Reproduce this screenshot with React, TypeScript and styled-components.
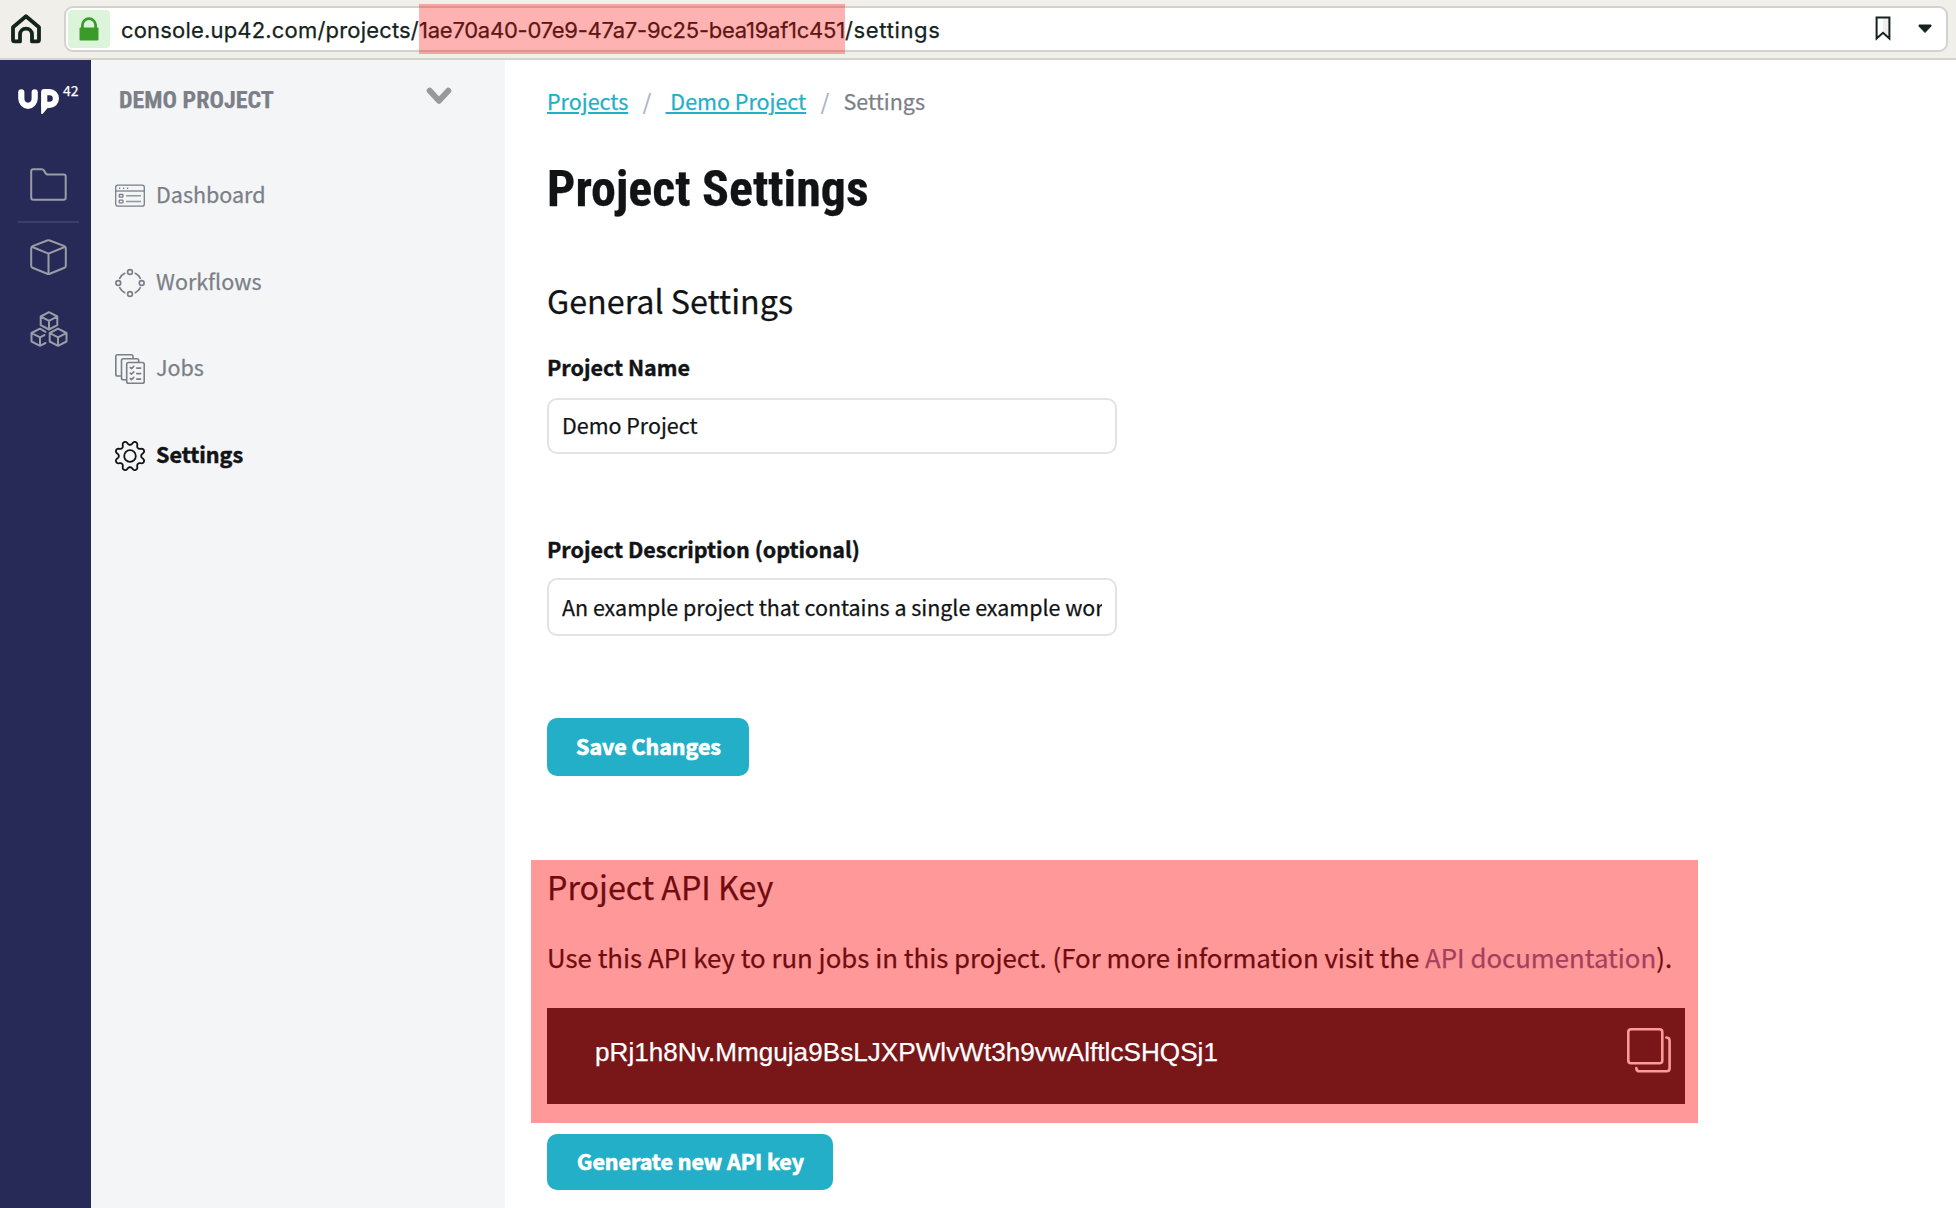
import React from "react";
import styled, { createGlobalStyle } from "styled-components";

const sans = '"Noto Sans CJK SC", "Noto Sans", sans-serif';
const condensed = '"Roboto Condensed", Roboto, sans-serif';

const GlobalStyle = createGlobalStyle`
  * { box-sizing: border-box; }
  body { margin: 0; background: #fff; }
`;

const Page = styled.div`
  height: 1208px;
  display: flex;
  flex-direction: column;
  overflow: hidden;
  font-family: ${sans};
  color: #111315;
  white-space: nowrap;
  -webkit-text-stroke: 0.25px currentColor;
`;

/* Browser bar */

const BrowserBar = styled.header`
  flex: none;
  height: 60px;
  display: flex;
  align-items: flex-start;
  padding: 6px 8px 0 9px;
  background: #f0efe9;
  border-bottom: 2px solid #d3d2cd;
`;

const HomeButton = styled.div`
  width: 34px;
  height: 46px;
  display: flex;
  align-items: center;
  margin-right: 21px;
`;

const AddressField = styled.div`
  flex: 1;
  height: 46px;
  display: flex;
  align-items: center;
  padding: 0 14px 0 2px;
  background: #fff;
  border: 2px solid #d3d2cd;
  border-radius: 9px;
`;

const LockBadge = styled.div`
  width: 42px;
  height: 38px;
  display: flex;
  align-items: center;
  justify-content: center;
  background: #dcf5da;
  border-radius: 4px;
`;

const Url = styled.div`
  flex: 1;
  display: flex;
  padding-left: 11px;
  font-family: Inter, sans-serif;
  font-size: 22px;
  line-height: 50px;
  color: #14231b;
`;

const UrlPart = styled.span<{ $width: number; $tracking: number }>`
  width: ${(p) => p.$width}px;
  padding-top: 1px;
  letter-spacing: ${(p) => p.$tracking}px;
  position: relative;
`;

const UrlMark = styled.span`
  position: absolute;
  inset: 0 0 1px;
  background: rgba(255, 0, 0, 0.3);
`;

const FieldActions = styled.div`
  display: flex;
  align-items: center;
  gap: 27px;
`;

/* Navigation */

const Body = styled.div`
  flex: 1;
  display: flex;
  min-height: 0;
`;

const Rail = styled.nav`
  flex: none;
  width: 91px;
  display: flex;
  flex-direction: column;
  align-items: center;
  padding: 25px 0 0 6px;
  background: #272a57;
`;

const Logo = styled.div`
  width: 61px;
  height: 31px;
  display: flex;
  align-items: flex-start;
`;

const LogoExponent = styled.span`
  margin-left: 2px;
  margin-top: -2px;
  font-size: 14px;
  line-height: 14px;
  color: #fff;
`;

const RailItem = styled.div<{ $gap: number }>`
  height: 40px;
  margin-top: ${(p) => p.$gap}px;
  display: flex;
  align-items: center;
`;

const RailDivider = styled.div`
  width: 61px;
  height: 2px;
  margin-top: 17px;
  background: #3c3e69;
`;

const SidePanel = styled.aside`
  flex: none;
  width: 414px;
  padding: 22px 53px 0 24px;
  background: #f3f5f7;
`;

const ProjectSwitch = styled.div`
  height: 34px;
  display: flex;
  justify-content: space-between;
  padding-left: 4px;
  margin-bottom: 56px;
`;

const ProjectTitle = styled.span`
  font-family: ${condensed};
  font-weight: 700;
  font-size: 24px;
  line-height: 36px;
  color: #7b7f87;
`;

const ChevronBox = styled.span`
  display: flex;
  height: 18px;
  margin-top: 5px;
`;

const MenuItem = styled.div<{ $active?: boolean }>`
  height: 48px;
  margin-bottom: 38.5px;
  display: flex;
  align-items: center;
  gap: 11px;
  font-size: 21.5px;
  font-weight: ${(p) => (p.$active ? 700 : 400)};
  color: ${(p) => (p.$active ? "#111315" : "#7b7f87")};
  -webkit-text-stroke-width: ${(p) => (p.$active ? 0.5 : 0.25)}px;
`;

const MenuText = styled.span`
  line-height: 32px;
  padding-bottom: 4px;
`;

/* Content */

const Content = styled.main`
  flex: 1;
  display: flex;
  flex-direction: column;
  align-items: flex-start;
  padding: 26px 0 0 42px;
`;

const Breadcrumb = styled.div`
  display: flex;
  height: 30px;
  font-size: 21.5px;
  line-height: 30px;
  color: #7b7f87;
`;

const CrumbLink = styled.a`
  color: #22afc7;
  white-space: pre;
  text-decoration: underline;
  text-decoration-thickness: 2px;
  text-underline-offset: 2px;
`;

const Slash = styled.span`
  width: 37.3px;
  text-align: center;
  color: #a9b0bf;
`;

const Title = styled.h1`
  margin: 43px 0 0;
  font-family: ${condensed};
  font-weight: 700;
  font-size: 50px;
  line-height: 60px;
`;

const SectionTitle = styled.h2<{ $top: number }>`
  margin: ${(p) => p.$top}px 0 0;
  font-weight: 400;
  font-size: 32.25px;
  line-height: 40px;
`;

const Label = styled.label<{ $top: number }>`
  margin-top: ${(p) => p.$top}px;
  font-weight: 700;
  font-size: 21.5px;
  line-height: 30px;
  -webkit-text-stroke-width: 0.4px;
`;

const TextField = styled.div<{ $top: number; $height: number }>`
  width: 570px;
  height: ${(p) => p.$height}px;
  margin-top: ${(p) => p.$top}px;
  padding: 0 13px;
  border: 2px solid #e2e2e8;
  border-radius: 10px;
  background: #fff;
`;

const FieldValue = styled.div<{ $line: number }>`
  overflow: hidden;
  font-size: 21.45px;
  line-height: ${(p) => p.$line}px;
`;

const Button = styled.button<{ $top: number; $height: number; $width: number }>`
  width: ${(p) => p.$width}px;
  height: ${(p) => p.$height}px;
  margin: ${(p) => p.$top}px 0 0;
  padding: 0 0 3px 1px;
  border: 0;
  border-radius: 10px;
  background: #22afc7;
  color: #fff;
  font-family: ${sans};
  font-weight: 700;
  font-size: 21.4px;
  line-height: 32px;
  -webkit-text-stroke: 0.7px #fff;
`;

const KeyPanel = styled.section`
  width: 1167px;
  height: 263px;
  margin: 84px 0 0 -16px;
  padding: 6px 13px 0 16px;
  background: #ff9999;
  color: #700c0f;
`;

const KeyHint = styled.p`
  margin: 33px 0 0;
  font-size: 25.8px;
  line-height: 36px;
`;

const DocLink = styled.a`
  color: #a53f5d;
`;

const KeyBox = styled.div`
  height: 96px;
  margin-top: 33px;
  display: flex;
  align-items: flex-start;
  justify-content: space-between;
  padding: 20px 14px 0 48px;
  background: #791618;
`;

const KeyValue = styled.span`
  font-family: "Liberation Sans", Arial, sans-serif;
  font-size: 26.1px;
  letter-spacing: 0.03px;
  line-height: 48px;
  color: #fff;
`;

/* Icons */

const HomeIcon = () => (
  <svg width="34" height="32" viewBox="0 0 34 32" fill="none" stroke="#14231b" strokeWidth="3.8" strokeLinejoin="round" strokeLinecap="round">
    <path d="M4 14.2 17 3.2l13 11v12.6q0 1.600-1.600 1.600h-5.400v-6.700a6 6 0 0 0-12 0v6.700H5.600Q4 28.400 4 26.800Z" />
  </svg>
);

const LockIcon = () => (
  <svg width="20" height="24" viewBox="0 0 20 24">
    <path d="M3.400 12V8.300a6.600 6.600 0 0 1 13.200 0V12" fill="none" stroke="#3a9c28" strokeWidth="2.800" />
    <rect x="0.500" y="10.500" width="19" height="13" rx="1" fill="#3a9c28" />
  </svg>
);

const BookmarkIcon = () => (
  <svg width="16" height="26" viewBox="0 0 16 26">
    <path d="M8 1h6v22l-6-6Z" fill="#efefef" />
    <path d="M1.600 1.600h12.800v21L8 16.800l-6.400 5.800Z" fill="none" stroke="#14231b" strokeWidth="2" />
  </svg>
);

const CaretIcon = () => (
  <svg width="14" height="10" viewBox="0 0 14 10">
    <path d="M1 1h12v1.200L7 8.500 1 2.200Z" fill="#14231b" stroke="#14231b" strokeLinejoin="round" />
  </svg>
);

const LogoMark = () => (
  <svg width="43" height="31" viewBox="0 0 43 31" role="img" aria-label="up" fill="none" stroke="#fff">
    <path d="M3.300 7.300v6.300a6.700 7.200 0 0 0 13.400 0V7.300" strokeWidth="6.200" strokeLinecap="round" />
    <path d="M26.200 19.800V7.200h5.400a6.300 6.300 0 0 1 0 12.600Z" strokeWidth="6.200" strokeLinejoin="round" />
    <path d="M23.100 18v10.200q.4 1.300 1.700.5l5-5.900V18Z" fill="#fff" stroke="none" />
  </svg>
);

const FolderIcon = () => (
  <svg width="37" height="33" viewBox="0 0 37 33" fill="none" stroke="#9a9da6" strokeWidth="2" strokeLinejoin="round">
    <path d="M1.200 3.200q0-2 2-2h8.600q1.300 0 2 1.100l2.100 3.300q.6.900 1.800.9h16q2 0 2 2v21.300q0 2-2 2H3.200q-2 0-2-2Z" />
  </svg>
);

const CubeIcon = () => (
  <svg width="37" height="36" viewBox="0 0 37 36" fill="none" stroke="#9a9da6" strokeWidth="2" strokeLinejoin="round">
    <path d="M17.200 1.500q1.300-.5 2.600 0l14.600 5.600q1.400.6 1.400 2v17.700q0 1.400-1.300 2l-14.700 6q-1.300.5-2.600 0l-14.700-6q-1.300-.6-1.300-2V9.100q0-1.400 1.400-2Z" />
    <path d="m1.700 7.800 16.800 6.800 16.800-6.800M18.500 14.600v20.300" />
  </svg>
);

const BlocksIcon = () => (
  <svg width="38" height="36" viewBox="0 0 38 36" fill="none" stroke="#9a9da6" strokeWidth="2" strokeLinejoin="round" strokeLinecap="round">
    <path d="m19 1.200 8.300 4.300v8.700L19 18.500l-8.300-4.300V5.500ZM11 5.700l8 4.100 8-4.100M19 9.800v8.400" />
    <path d="M28 17.700 36.500 22v8.500L28 34.800l-8.300-4.300V22ZM20 22.200l8 4.100 8.200-4.100M28 26.300v8.200" />
    <path d="M15.500 20.800 10 17.700 1.500 22v8.500l8.500 4.300 5.500-2.800M1.800 22.200l8.200 4.100 4.500-2.300M10 26.300v8.200" />
  </svg>
);

const ChevronIcon = () => (
  <svg width="26" height="18" viewBox="0 0 26 18" fill="none" stroke="#999" strokeWidth="6" strokeLinecap="round" strokeLinejoin="round">
    <path d="M3.700 3.800 13 13.800l9.300-10" />
  </svg>
);

const DashboardIcon = () => (
  <svg width="30" height="30" viewBox="0 0 30 30" fill="none" stroke="currentColor" strokeWidth="1.300">
    <rect x="0.700" y="4.200" width="28.600" height="21" rx="2.200" />
    <path d="M.7 10h28.600" />
    <path d="M4 7.200h1.200M8 7.200h1.200M12 7.200h1.200" strokeWidth="1.400" />
    <rect x="4.200" y="13.500" width="3.800" height="2.600" rx="0.600" />
    <rect x="4.200" y="19.200" width="3.800" height="2.600" rx="0.600" />
    <path d="M11 14.800h15M11 20.500h15" strokeWidth="1.400" opacity="0.800" />
  </svg>
);

const WorkflowIcon = () => (
  <svg width="30" height="30" viewBox="0 0 30 30" fill="none" stroke="currentColor" strokeWidth="1.700" strokeLinecap="round">
    <circle cx="15" cy="4" r="2.400" />
    <circle cx="26.700" cy="15" r="2.400" />
    <circle cx="15" cy="26" r="2.400" />
    <circle cx="3.300" cy="15" r="2.400" />
    <path d="M4.700 10.300q1.600-3.300 5-5M20.300 5.300q3.400 1.700 5 5M25.300 19.700q-1.600 3.300-5 5M9.700 24.700q-3.400-1.700-5-5" />
  </svg>
);

const JobsIcon = () => (
  <svg width="30" height="30" viewBox="0 0 30 30" fill="none" stroke="currentColor" strokeWidth="1.600" strokeLinejoin="round" strokeLinecap="round">
    <path d="M5.500 22H2.600Q.8 22 .8 20.200V2.600Q.8.800 2.600.8h13.600Q18 .8 18 2.600v1.200" />
    <path d="M11 25.800H8.300q-1.800 0-1.800-1.800V6.500q0-1.800 1.800-1.800H22q1.700 0 1.700 1.800v1.200" />
    <rect x="11.700" y="8.500" width="17.500" height="20.700" rx="1.800" />
    <path d="m15.300 13.600 1.200 1 2.300-2.200M15.300 19.100l1.200 1 2.300-2.200M15.300 24.600l1.200 1 2.300-2.200M21.700 14.100h4M21.700 19.600h4M21.700 25.100h4" />
  </svg>
);

const gearPath = Array.from({ length: 144 }, (_, i) => {
  const angle = (i / 144) * Math.PI * 2;
  const wave = Math.tanh(-1.4 * Math.cos(8 * angle)) / Math.tanh(1.4);
  const radius = 13.1 + 1.9 * wave;
  const x = (15 + radius * Math.sin(angle)).toFixed(2);
  const y = (15 - radius * Math.cos(angle)).toFixed(2);
  return `${i ? "L" : "M"}${x} ${y}`;
}).join("");

const GearIcon = () => (
  <svg width="30" height="30" viewBox="0 0 30 30" fill="none" stroke="currentColor" strokeWidth="1.800" strokeLinejoin="round">
    <path d={gearPath + "Z"} />
    <circle cx="15" cy="15" r="5.800" />
  </svg>
);

const CopyIcon = () => (
  <svg width="44" height="45" viewBox="0 0 44 45" fill="none" stroke="#ff9999" strokeWidth="2.600" strokeLinecap="round">
    <rect x="1.300" y="1.300" width="34" height="34" rx="2.800" />
    <path d="M39.400 9.500q3.200.2 3.200 3.200v27.600q0 3-3 3H12.500q-3 0-3.200-3.200" />
  </svg>
);

const menu = [
  { name: "Dashboard", Icon: DashboardIcon },
  { name: "Workflows", Icon: WorkflowIcon },
  { name: "Jobs", Icon: JobsIcon },
  { name: "Settings", Icon: GearIcon, active: true },
];

export default function App() {
  return (
    <Page>
      <GlobalStyle />
      <BrowserBar>
        <HomeButton><HomeIcon /></HomeButton>
        <AddressField>
          <LockBadge><LockIcon /></LockBadge>
          <Url>
            <UrlPart $width={298} $tracking={0.18}>console.up42.com/projects/</UrlPart>
            <UrlPart $width={426} $tracking={-0.25}>
              1ae70a40-07e9-47a7-9c25-bea19af1c451
              <UrlMark />
            </UrlPart>
            <UrlPart $width={100} $tracking={0.65}>/settings</UrlPart>
          </Url>
          <FieldActions><BookmarkIcon /><CaretIcon /></FieldActions>
        </AddressField>
      </BrowserBar>
      <Body>
        <Rail>
          <Logo><LogoMark /><LogoExponent>42</LogoExponent></Logo>
          <RailItem $gap={48}><FolderIcon /></RailItem>
          <RailDivider />
          <RailItem $gap={14}><CubeIcon /></RailItem>
          <RailItem $gap={32}><BlocksIcon /></RailItem>
        </Rail>
        <SidePanel>
          <ProjectSwitch>
            <ProjectTitle>DEMO PROJECT</ProjectTitle>
            <ChevronBox><ChevronIcon /></ChevronBox>
          </ProjectSwitch>
          {menu.map(({ name, Icon, active }) => (
            <MenuItem key={name} $active={active}>
              <Icon />
              <MenuText>{name}</MenuText>
            </MenuItem>
          ))}
        </SidePanel>
        <Content>
          <Breadcrumb>
            <CrumbLink>Projects</CrumbLink>
            <Slash>/</Slash>
            <CrumbLink> Demo Project</CrumbLink>
            <Slash>/</Slash>
            <span>Settings</span>
          </Breadcrumb>
          <Title>Project Settings</Title>
          <SectionTitle $top={61}>General Settings</SectionTitle>
          <Label $top={32}>Project Name</Label>
          <TextField $top={16} $height={56}><FieldValue $line={50}>Demo Project</FieldValue></TextField>
          <Label $top={80}>Project Description (optional)</Label>
          <TextField $top={14} $height={58}>
            <FieldValue $line={54}>An example project that contains a single example wor</FieldValue>
          </TextField>
          <Button $top={82} $height={58} $width={202}>Save Changes</Button>
          <KeyPanel>
            <SectionTitle $top={0}>Project API Key</SectionTitle>
            <KeyHint>
              Use this API key to run jobs in this project. (For more information visit the <DocLink>API documentation</DocLink>).
            </KeyHint>
            <KeyBox>
              <KeyValue>pRj1h8Nv.Mmguja9BsLJXPWlvWt3h9vwAlftlcSHQSj1</KeyValue>
              <CopyIcon />
            </KeyBox>
          </KeyPanel>
          <Button $top={11} $height={56} $width={286}>Generate new API key</Button>
        </Content>
      </Body>
    </Page>
  );
}
